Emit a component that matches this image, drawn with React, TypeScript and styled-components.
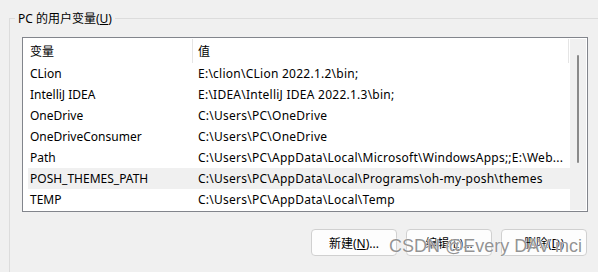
import styled, { createGlobalStyle } from 'styled-components';

const GlobalStyle = createGlobalStyle`
    html, body {
        margin: 0;
        padding: 0;
        background: #f0f0f0;
        overflow: hidden;
    }
    body {
        font-family: "Noto Sans", "Noto Sans CJK SC", sans-serif;
        font-size: 12px;
        color: #000;
    }
`;

interface EnvVar {
    name: string;
    value: string;
}

const vars: EnvVar[] = [
    { name: 'CLion', value: 'E:\\clion\\CLion 2022.1.2\\bin;' },
    { name: 'IntelliJ IDEA', value: 'E:\\IDEA\\IntelliJ IDEA 2022.1.3\\bin;' },
    { name: 'OneDrive', value: 'C:\\Users\\PC\\OneDrive' },
    { name: 'OneDriveConsumer', value: 'C:\\Users\\PC\\OneDrive' },
    { name: 'Path', value: 'C:\\Users\\PC\\AppData\\Local\\Microsoft\\WindowsApps;;E:\\Web...' },
    { name: 'POSH_THEMES_PATH', value: 'C:\\Users\\PC\\AppData\\Local\\Programs\\oh-my-posh\\themes' },
    { name: 'TEMP', value: 'C:\\Users\\PC\\AppData\\Local\\Temp' },
];

const App = () => {
    const selected = 5;

    return (
        <Page>
            <GlobalStyle />
            <Group>
                <Legend>
                    PC 的用户变量(<u>U</u>)
                </Legend>
                <ListBox>
                    <Table>
                        <Header>
                            <HeadCell>变量</HeadCell>
                            <HeadCell>值</HeadCell>
                        </Header>
                        {vars.map((v, i) => (
                            <Row key={v.name} $active={i === selected}>
                                <NameCell>{v.name}</NameCell>
                                <ValueCell>{v.value}</ValueCell>
                            </Row>
                        ))}
                    </Table>
                    <ScrollTrack>
                        <Thumb />
                    </ScrollTrack>
                </ListBox>
                <Buttons>
                    <Button>
                        新建(<u>N</u>)...
                    </Button>
                    <Button>
                        编辑(<u>E</u>)...
                    </Button>
                    <Button>
                        删除(<u>D</u>)
                    </Button>
                </Buttons>
            </Group>
            <Watermark>CSDN @Every DAV inci</Watermark>
        </Page>
    );
};

export default App;

const Page = styled.div`
    position: relative;
    width: 598px;
    height: 272px;
    overflow: hidden;
`;

const Group = styled.fieldset`
    margin: 10px 0 0 9px;
    padding: 10px 10px 0 12px;
    border: 1px solid #dcdcdc;
    border-right: none;
    border-bottom: none;
    min-width: 0;
    height: 300px;
`;

const Legend = styled.legend`
    margin-left: -7px;
    padding: 0 3px;
    line-height: 17px;
    font-size: 12px;
`;

const ListBox = styled.div`
    display: grid;
    grid-template-columns: 1fr 16px;
    height: 171px;
    padding: 1px;
    border: 1px solid #82858c;
    background: #fff;
    overflow: hidden;
`;

const Table = styled.div`
    display: flex;
    flex-direction: column;
    overflow: hidden;
`;

const Header = styled.div`
    display: grid;
    grid-template-columns: 169px 1fr;
    height: 24px;
    flex-shrink: 0;
`;

const HeadCell = styled.div`
    display: flex;
    align-items: center;
    padding-left: 6px;
    border-right: 1px solid #e5e5e5;

    & + & {
        padding-left: 5px;
        margin-right: 1px;
    }
`;

const Row = styled.div<{ $active?: boolean }>`
    display: grid;
    grid-template-columns: 164px 1fr;
    align-items: center;
    height: 21px;
    flex-shrink: 0;
    margin-left: 4px;
    background: ${(p) => (p.$active ? '#f0f0f0' : 'transparent')};
`;

const NameCell = styled.div`
    padding-left: 2px;
    white-space: nowrap;
    overflow: hidden;
`;

const ValueCell = styled.div`
    padding-left: 6px;
    letter-spacing: 0.25px;
    white-space: nowrap;
    overflow: hidden;
`;

const ScrollTrack = styled.div`
    display: flex;
    justify-content: center;
    padding-top: 16px;
    background: #f0f0f0;
`;

const Thumb = styled.div`
    width: 2px;
    height: 108px;
    border-radius: 1px;
    background: #8a8a8a;
`;

const Buttons = styled.div`
    display: flex;
    justify-content: flex-end;
    gap: 9px;
    margin-top: 17px;
    padding-right: 1px;
`;

const Button = styled.button`
    width: 86px;
    height: 27px;
    padding: 0;
    border: 1px solid #d0d0d0;
    border-radius: 4px;
    background: #fdfdfd;
    font-family: "Noto Sans", "Noto Sans CJK SC", sans-serif;
    font-size: 12px;
    color: #000;
`;

const Watermark = styled.div`
    position: absolute;
    left: 389px;
    top: 236px;
    font-family: "Liberation Sans", Arial, sans-serif;
    font-size: 18px;
    color: rgba(128, 128, 128, 0.85);
    text-shadow: 0 0 1px #fff, 0 0 2px #fff;
    white-space: nowrap;
    pointer-events: none;
`;
